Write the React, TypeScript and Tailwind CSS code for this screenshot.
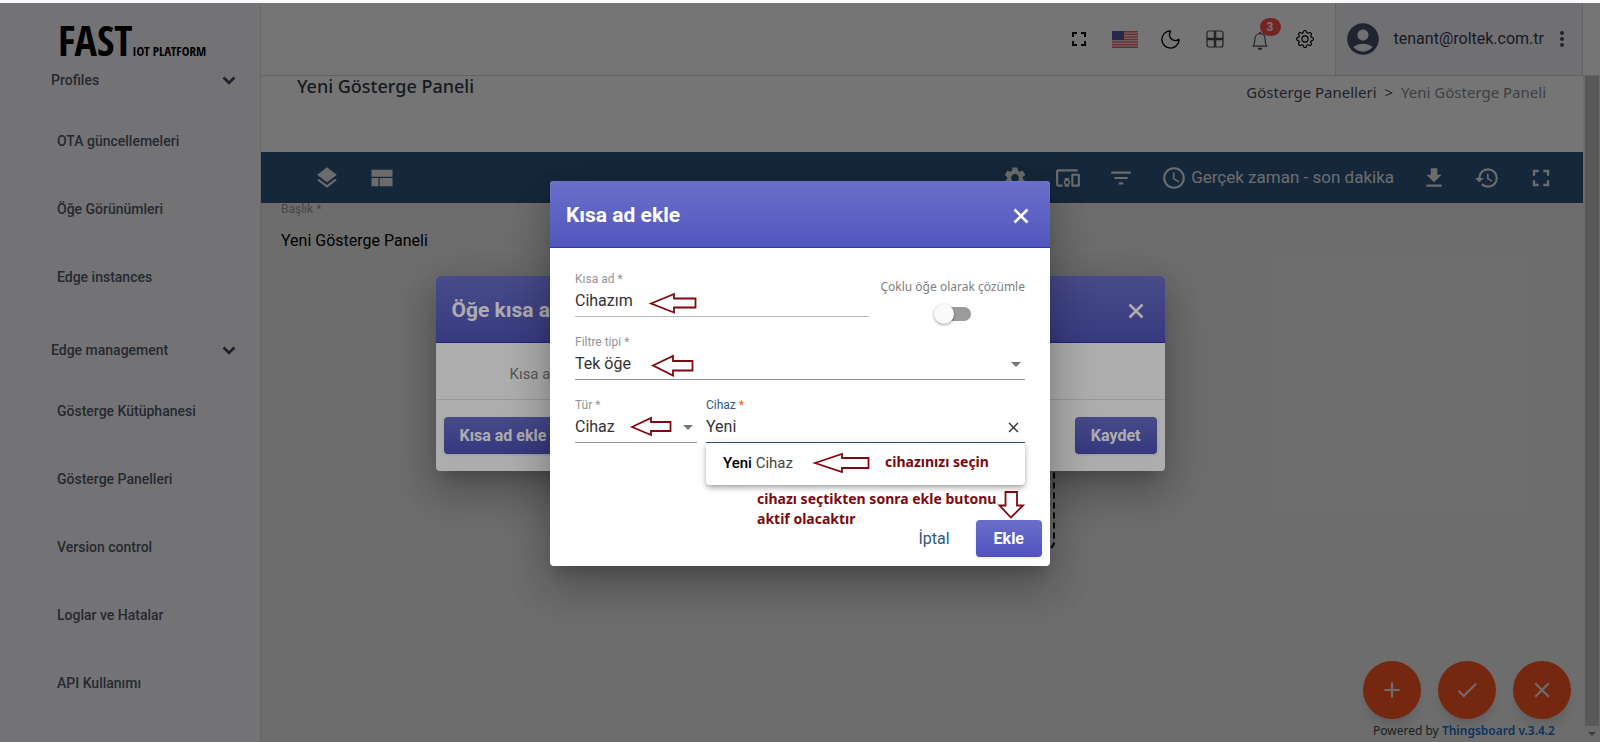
import { useState, type ReactNode } from "react";

// Icons
import { BsBell, BsGear } from "react-icons/bs";
import { Moon } from "lucide-react";
import {
  MdAccountCircle,
  MdAccessTime,
  MdAdd,
  MdCheck,
  MdClose,
  MdDevicesOther,
  MdFileDownload,
  MdFilterList,
  MdFullscreen,
  MdHistory,
  MdLayers,
  MdMoreVert,
  MdSettings,
} from "react-icons/md";

const groups = [
  {
    title: "Profiles",
    items: ["OTA güncellemeleri", "Öğe Görünümleri", "Edge instances"],
  },
  {
    title: "Edge management",
    items: [
      "Gösterge Kütüphanesi",
      "Gösterge Panelleri",
      "Version control",
      "Loglar ve Hatalar",
      "API Kullanımı",
    ],
  },
];

const buttonClass =
  "h-[37px] rounded bg-linear-to-b from-[#6b6fca] to-[#5052bc] font-bold text-white shadow-sm";

function Sidebar() {
  return (
    <aside className="w-[261px] shrink-0 overflow-hidden border-r border-[#e4e4ec] bg-[#fbfbff]">
      <a
        href="#"
        className="flex h-[50px] items-baseline pl-[58px] font-['Open_Sans_Condensed','Roboto_Condensed',sans-serif] font-bold leading-[74px] text-black"
      >
        <span className="text-[42px]">FAST</span>
        <span className="text-[13px]">IOT PLATFORM</span>
      </a>
      <nav className="text-sm font-medium text-[#545a6d]">
        {groups.map(({ title, items }) => (
          <div key={title} className="mb-3">
            <button className="flex h-[54px] w-full items-center justify-between pl-[51px] pr-6">
              {title}
              <svg viewBox="0 0 14 9" className="w-[14px]" fill="none">
                <path d="M1.5 1.5 7 6.7l5.5-5.2" stroke="#454a60" strokeWidth="2.8" />
              </svg>
            </button>
            {items.map((item) => (
              <a key={item} href="#" className="flex h-[68px] items-center pl-[57px]">
                {item}
              </a>
            ))}
          </div>
        ))}
      </nav>
    </aside>
  );
}

function Flag() {
  return (
    <svg viewBox="0 0 26 17" className="w-[26px]">
      <rect width="26" height="17" fill="#f6dcde" />
      {[0, 1, 2, 3, 4, 5, 6].map((i) => (
        <rect key={i} y={i * 2.6} width="26" height="1.4" fill="#ee6470" />
      ))}
      <rect width="12" height="9" fill="#5658a4" />
    </svg>
  );
}

function Header() {
  return (
    <header className="flex h-[73px] shrink-0 items-center justify-end border-b border-[#d8d8d8] bg-white pr-[17px]">
      <div className="mr-[18px] flex items-center gap-[21px] text-black">
        <button aria-label="Tam ekran">
          <MdFullscreen size={24} />
        </button>
        <button aria-label="Dil">
          <Flag />
        </button>
        <button aria-label="Tema">
          <Moon size={23} strokeWidth={1.5} />
        </button>
        <button aria-label="Uygulamalar" className="p-[3px]">
          <svg viewBox="0 0 18 18" className="w-[18px]" fill="none" stroke="#4a4a4a" strokeWidth="1.2">
            <rect x="1" y="1" width="16" height="16" rx="2" />
            <path d="M8.400 1v16M9.700 1v16M1 8.400h16M1 9.700h16" />
          </svg>
        </button>
        <button aria-label="Bildirimler" className="relative p-[3px] pt-[7px] text-[#505050]">
          <BsBell size={18} />
          <span className="absolute -top-[7px] left-3 flex h-[18px] w-[21px] items-center justify-center rounded-full bg-[#ff5050] text-xs font-bold text-white">
            3
          </span>
        </button>
        <button aria-label="Ayarlar" className="p-[3px]">
          <BsGear size={18} />
        </button>
      </div>
      <div className="flex h-full items-center border-x border-[#dcdce4] bg-[#f3f3f9] pl-2 pr-2 text-[#4a5068]">
        <MdAccountCircle size={38} />
        <span className="ml-3 mr-[6px] text-base text-[#383c50]">tenant@roltek.com.tr</span>
        <button aria-label="Menü">
          <MdMoreVert size={24} />
        </button>
      </div>
    </header>
  );
}

function Toolbar() {
  return (
    <div className="flex h-[51px] shrink-0 items-center justify-between bg-[#305680] pl-[53px] pr-7 text-[#ececec]">
      <div className="flex gap-7">
        <button aria-label="Katmanlar">
          <MdLayers size={26} />
        </button>
        <button aria-label="Düzen">
          <svg viewBox="0 0 24 24" className="w-[28px]" fill="currentColor">
            <path d="M3 19h6v-7H3v7zm7 0h11v-7H10v7zM3 5v6h18V5H3z" />
          </svg>
        </button>
      </div>
      <div className="flex items-center gap-[27px]">
        <button aria-label="Ayarlar">
          <MdSettings size={26} />
        </button>
        <button aria-label="Öğe kısa adları">
          <MdDevicesOther size={26} />
        </button>
        <button aria-label="Filtreler">
          <MdFilterList size={26} />
        </button>
        <button className="flex items-center gap-1 text-[17px]">
          <MdAccessTime size={26} />
          Gerçek zaman - son dakika
        </button>
        <button aria-label="İndir">
          <MdFileDownload size={26} />
        </button>
        <button aria-label="Sürümler">
          <MdHistory size={26} />
        </button>
        <button aria-label="Tam ekran">
          <MdFullscreen size={28} />
        </button>
      </div>
    </div>
  );
}

function Dashboard() {
  return (
    <div className="flex min-w-0 flex-1 flex-col">
      <Header />
      <div className="flex min-h-0 flex-1">
        <main className="flex min-w-0 flex-1 flex-col bg-[#eee]">
          <div className="flex h-[76px] shrink-0 justify-between bg-white pl-9 pr-[37px] font-['Noto_Sans',sans-serif]">
            <h1 className="text-lg leading-[21px] font-medium text-[#343a4c]">Yeni Gösterge Paneli</h1>
            <p className="pt-1 text-[15px] leading-6 text-[#888c98]">
              <a href="#" className="text-[#484c58]">
                Gösterge Panelleri
              </a>
              <span className="mx-2 text-[#484c58]">&gt;</span>
              Yeni Gösterge Paneli
            </p>
          </div>
          <Toolbar />
          <div className="flex flex-1 flex-col px-5">
            <p className="text-xs leading-3 text-[#9a9a9a]">Başlık *</p>
            <p className="mt-[14px] text-base text-black">Yeni Gösterge Paneli</p>
            <div className="mx-auto mt-8 h-[265px] w-[266px] rounded-lg border-2 border-dashed border-black" />
          </div>
          <footer className="flex shrink-0 flex-col items-end pr-3">
            <div className="flex gap-[17px] text-[#eee]">
              {[MdAdd, MdCheck, MdClose].map((Icon, i) => (
                <button
                  key={i}
                  aria-label={["Ekle", "Uygula", "Kapat"][i]}
                  className="flex size-[58px] items-center justify-center rounded-full bg-[#ff5722] shadow-lg"
                >
                  <Icon size={26} />
                </button>
              ))}
            </div>
            <p className="mr-4 pt-[2px] pb-[2px] font-['Noto_Sans',sans-serif] text-xs leading-[19px] text-[#444]">
              Powered by{" "}
              <a href="#" className="font-semibold text-[#2070c8]">
                Thingsboard v.3.4.2
              </a>
            </p>
          </footer>
        </main>
        <div className="flex w-[17px] shrink-0 flex-col items-center bg-[#ececec]">
          <div className="w-[14px] flex-1 bg-[#c1c1c1]" />
          <svg viewBox="0 0 8 4" className="my-[6px] w-2" fill="#808080">
            <path d="M0 0h8L4 4z" />
          </svg>
        </div>
      </div>
    </div>
  );
}

function Dialog({ title, className, children }: { title: string; className: string; children: ReactNode }) {
  return (
    <div className="absolute inset-0 flex items-center justify-center bg-black/32 pt-[2px]">
      <section
        role="dialog"
        aria-label={title}
        className={`relative rounded bg-white shadow-[0_11px_15px_-7px_rgba(0,0,0,0.2),0_24px_38px_3px_rgba(0,0,0,0.14),0_9px_46px_8px_rgba(0,0,0,0.12)] ${className}`}
      >
        <div className="flex h-[67px] items-center justify-between rounded-t border-b border-[#3036b0] bg-linear-to-b from-[#6b6fca] to-[#5256be] px-4 pt-[3px] text-white">
          <h2 className="text-[21px] font-bold">{title}</h2>
          <button aria-label="Kapat">
            <svg viewBox="0 0 26 26" className="w-[26px]" stroke="currentColor" strokeWidth="2.6">
              <path d="M6.500 6.500l13 13M19.500 6.500l-13 13" />
            </svg>
          </button>
        </div>
        {children}
      </section>
    </div>
  );
}

function Field({
  id,
  label,
  className,
  children,
}: {
  id: string;
  label: ReactNode;
  className: string;
  children: ReactNode;
}) {
  return (
    <div className={`flex h-[46px] flex-col border-b text-[#949494] ${className}`}>
      <label htmlFor={id} className="text-xs">
        {label}
      </label>
      <div className="mt-[2px] flex items-center text-base leading-6">{children}</div>
    </div>
  );
}

function Select({ id, value }: { id: string; value: string }) {
  return (
    <>
      <select id={id} className="w-full flex-1 appearance-none text-[#333] outline-none">
        <option>{value}</option>
      </select>
      <svg viewBox="0 0 10 5" className="mr-1 w-[10px] shrink-0" fill="#757575">
        <path d="M0 0h10L5 5z" />
      </svg>
    </>
  );
}

// Red guide arrows and notes drawn over the form
function Hints() {
  return (
    <div className="pointer-events-none absolute inset-0 font-['Noto_Sans',sans-serif] text-sm leading-5 font-bold text-[#7b0a10]">
      <svg viewBox="0 0 500 385" className="w-full" fill="#fff" stroke="#800810" strokeWidth="1.8">
        <path d="M101 122.5 124 113v4.5h21.500v9H124v5z" />
        <path d="M103 184.500 123 175v5h19.500v9.500H123v5z" />
        <path d="M82 246 101 237v4h19.500v9H101v4z" />
        <path d="M265 282 292 273v4h26.500v10H292v4z" />
        <path d="M455.500 311h11.500v13.500h6L461 336.500 449.500 324.500h6z" />
      </svg>
      <span className="absolute top-[271px] left-[335px]">cihazınızı seçin</span>
      <p className="absolute top-[308px] left-[207px] w-[245px]">
        cihazı seçtikten sonra ekle butonu aktif olacaktır
      </p>
    </div>
  );
}

export default function App() {
  const [alias, setAlias] = useState("Cihazım");
  const [device, setDevice] = useState("Yeni");
  const [multiple, setMultiple] = useState(false);

  return (
    <div className="flex h-screen flex-col overflow-hidden bg-[#f8fafc] pt-[3px] font-['Roboto',sans-serif]">
      <div className="relative flex min-h-0 flex-1">
        <Sidebar />
        <Dashboard />

        <Dialog title="Öğe kısa adları" className="w-[729px]">
          <p className="h-[57px] border-b border-[#e0e0e0] pt-[19px] pl-[74px] text-[15px] leading-6 text-[#808080]">
            Kısa ad
          </p>
          <div className="flex justify-between px-2 py-[17px]">
            <button className={`${buttonClass} px-4`}>Kısa ad ekle</button>
            <button className={`${buttonClass} px-4`}>Kaydet</button>
          </div>
        </Dialog>

        <Dialog title="Kısa ad ekle" className="w-[500px]">
          <form className="flex flex-col gap-[17px] px-[25px] pt-[23px]">
            <div className="flex gap-[11px]">
              <Field id="alias" label="Kısa ad *" className="flex-1 border-[#bdbdbd]">
                <input
                  id="alias"
                  value={alias}
                  onChange={(e) => setAlias(e.target.value)}
                  className="w-full text-[#333] outline-none"
                />
              </Field>
              <div className="flex h-[46px] flex-col items-center pt-[6px] font-['Noto_Sans',sans-serif] text-xs leading-5 text-[#808080]">
                <label htmlFor="multiple">Çoklu öğe olarak çözümle</label>
                <span className="relative mt-2 flex h-[18px] w-9 shrink-0 items-center">
                  <input
                    id="multiple"
                    type="checkbox"
                    checked={multiple}
                    onChange={(e) => setMultiple(e.target.checked)}
                    className="peer h-[14px] w-9 appearance-none rounded-full bg-[#9b9b9b] checked:bg-[#5256be]"
                  />
                  <span className="pointer-events-none absolute -left-px size-5 rounded-full bg-[#fafafa] shadow-[0_1px_3px_rgba(0,0,0,0.4)] peer-checked:left-4" />
                </span>
              </div>
            </div>
            <Field id="filter" label="Filtre tipi *" className="border-[#949494]">
              <Select id="filter" value="Tek öğe" />
            </Field>
            <div className="relative flex gap-[9px]">
              <Field id="type" label="Tür *" className="w-[122px] border-[#949494]">
                <Select id="type" value="Cihaz" />
              </Field>
              <Field
                id="device"
                label={
                  <span className="text-[#305680]">
                    Cihaz <span className="text-[#ff5722]">*</span>
                  </span>
                }
                className="flex-1 border-[#305680]"
              >
                <input
                  id="device"
                  value={device}
                  onChange={(e) => setDevice(e.target.value)}
                  className="w-full min-w-0 flex-1 text-[#333] outline-none"
                />
                <button type="button" aria-label="Temizle" className="mr-[3px] text-[#333]">
                  <MdClose size={17} />
                </button>
              </Field>
              <ul className="absolute top-full right-0 left-[131px] rounded-b bg-white shadow-[0_2px_4px_-1px_rgba(0,0,0,0.2),0_4px_5px_rgba(0,0,0,0.14),0_1px_10px_rgba(0,0,0,0.12)]">
                <li className="h-[42px] pl-[17px] text-[15px] leading-10 text-[#444]">
                  <b className="font-medium text-black">Yeni</b> Cihaz
                </li>
              </ul>
            </div>
          </form>
          <div className="mt-[77px] flex items-center justify-end gap-[26px] pr-2 pb-[9px]">
            <button className="text-[#305680]">İptal</button>
            <button className={`${buttonClass} px-[18px]`}>Ekle</button>
          </div>
          <Hints />
        </Dialog>
      </div>
    </div>
  );
}
